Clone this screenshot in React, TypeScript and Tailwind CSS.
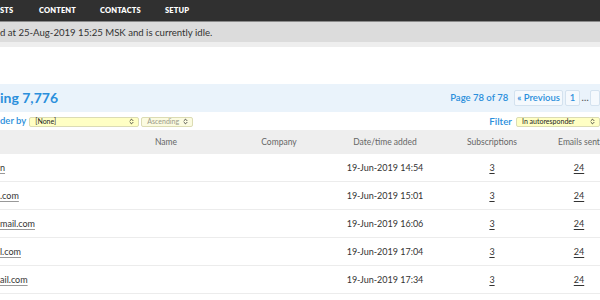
import { ChevronsUpDown } from 'lucide-react'

const rows = [
  { email: 'n', added: '19-Jun-2019 14:54' },
  { email: '.com', added: '19-Jun-2019 15:01' },
  { email: 'mail.com', added: '19-Jun-2019 16:06' },
  { email: 'l.com', added: '19-Jun-2019 17:04' },
  { email: 'ail.com', added: '19-Jun-2019 17:34' },
]

const cols = 'grid grid-cols-[100px_132px_94px_118px_96px_78px] items-center'

function Select({ label, width, dim }: { label: string; width: string; dim?: boolean }) {
  return (
    <div
      className={`flex h-[10px] items-center justify-between rounded-[2px] border border-[#dcdcb4] pl-[5px] pr-[3px] ${width} ${
        dim ? 'bg-[#fbfbe0] text-[#9a9a8a]' : 'bg-[#ffffc4] text-[#222]'
      }`}
    >
      <span className="whitespace-nowrap text-[7px] leading-none">{label}</span>
      <ChevronsUpDown className="h-[7px] w-[7px] shrink-0 text-[#333]" strokeWidth={3} />
    </div>
  )
}

export default function App() {
  return (
    <div className="h-[300px] w-[600px] overflow-hidden bg-white font-['Lato',sans-serif] text-[#333]">
      <nav className="flex h-[22px] items-center border-b border-[#8a8a8a] bg-[#303030] text-[7.5px] font-extrabold tracking-[0.02em] text-white">
        <span className="w-[39px]">STS</span>
        <span className="w-[61px]">CONTENT</span>
        <span className="w-[65px]">CONTACTS</span>
        <span>SETUP</span>
      </nav>
      <div className="flex h-[20px] items-center bg-[#dcdcdc] pt-[2px] text-[9.6px] text-[#333]">
        d at 25-Aug-2019 15:25 MSK and is currently idle.
      </div>
      <div className="h-[5px] bg-[#eeeeee]" />

      <div className="mt-[37px] flex h-[28px] items-center justify-between bg-[#eaf3fb]">
        <h1 className="text-[14px] font-bold leading-none text-[#2b8fdc]">ing 7,776</h1>
        <div className="flex items-center whitespace-nowrap text-[9.5px] font-semibold text-[#2b8fdc]">
          <span className="mr-[6px]">Page 78 of 78</span>
          <span className="flex h-[16px] items-center justify-center rounded-[2px] border border-[#d4e2ef] bg-[#f5f9fd] px-[2px]">
            « Previous
          </span>
          <span className="ml-[2px] flex h-[16px] w-[15px] items-center justify-center rounded-[2px] border border-[#d4e2ef] bg-[#f5f9fd]">
            1
          </span>
          <span className="w-[10px] text-center text-[#555]">…</span>
          <span className="flex h-[16px] w-[10px] items-center rounded-[2px] border border-[#d4e2ef] bg-[#f5f9fd]" />
        </div>
      </div>

      <div className="mt-[4px] flex h-[11px] items-center justify-between">
        <div className="flex items-center gap-[2px]">
          <span className="mr-[1px] text-[9.5px] font-semibold text-[#2b8fdc]">der by</span>
          <Select label="[None]" width="w-[110px]" />
          <Select label="Ascending" width="w-[52px]" dim />
        </div>
        <div className="flex items-center gap-[4px]">
          <span className="text-[9.8px] font-semibold text-[#2b8fdc]">Filter</span>
          <Select label="In autoresponder" width="w-[84px]" />
        </div>
      </div>

      <div className="mt-[3px] w-[618px]">
        <div className={`${cols} h-[24px] bg-[#eeeeee] text-[8.5px] text-[#666]`}>
          <span />
          <span className="text-center">Name</span>
          <span className="text-center">Company</span>
          <span className="text-center">Date/time added</span>
          <span className="text-center">Subscriptions</span>
          <span className="whitespace-nowrap text-center">Emails sent</span>
        </div>
        {rows.map((r) => (
          <div key={r.added} className={`${cols} h-[28px] border-b border-[#ececec] text-[9px]`}>
            <span className="underline decoration-[#999] underline-offset-2">{r.email}</span>
            <span />
            <span />
            <span className="text-center">{r.added}</span>
            <span className="text-center underline underline-offset-2">3</span>
            <span className="text-center underline underline-offset-2">24</span>
          </div>
        ))}
      </div>
    </div>
  )
}
